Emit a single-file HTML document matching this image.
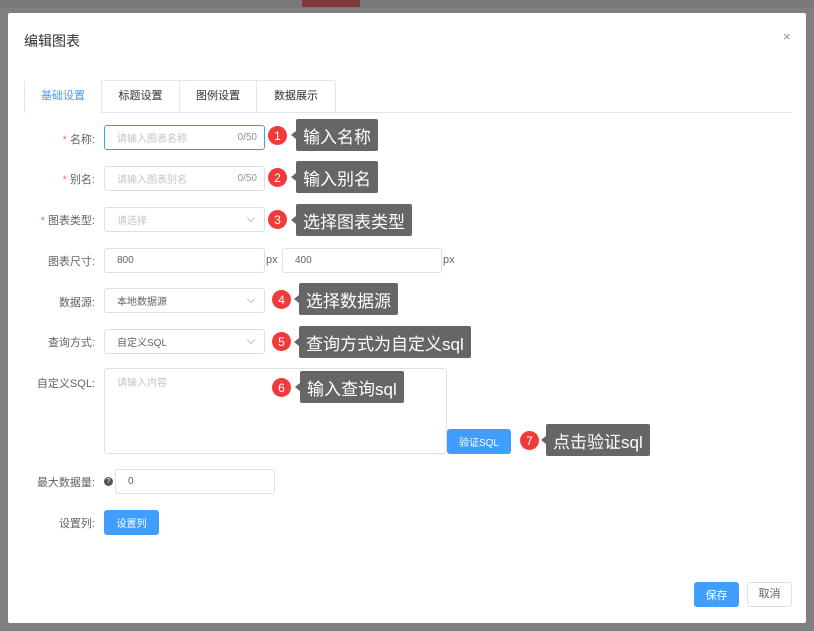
<!DOCTYPE html>
<html><head><meta charset="utf-8"><style>
*{box-sizing:border-box;margin:0;padding:0}
body{width:814px;height:631px;background:#808080;position:relative;overflow:hidden;font-family:"Liberation Sans","Noto Sans CJK SC",sans-serif;font-size:11px;color:#606266}
.a{position:absolute}
.dlg{left:8px;top:13px;width:798px;height:610px;background:#fff;border-radius:2px}
.inp{position:absolute;border:1px solid #dcdfe6;border-radius:3px;background:#fff;height:25px;display:flex;align-items:center;padding-left:12px;font-size:10px;color:#c0c4cc}
.lbl{position:absolute;right:719px;font-size:11px;color:#606266;text-align:right;white-space:nowrap}
.st{color:#f56c6c}
.cnt{position:absolute;right:7px;top:0;height:23px;display:flex;align-items:center;color:#909399}
.arr{position:absolute;right:10px;top:7px;width:6px;height:6px;border-right:1px solid #c0c4cc;border-bottom:1px solid #c0c4cc;transform:rotate(45deg)}
.num{position:absolute;width:19px;height:19px;border-radius:50%;background:#f03b3b;color:#fff;font-size:12px;display:flex;align-items:center;justify-content:center}
.tip{position:absolute;background:#666;color:#fff;font-size:17px;height:32px;display:flex;align-items:center;padding:0 7px;border-radius:2px;white-space:nowrap}
.tip:before{content:"";position:absolute;left:-5px;top:12px;border:4px solid transparent;border-right-color:#666;border-left:0;border-right-width:5px}
.btn{position:absolute;background:#409eff;color:#fff;border-radius:3px;display:flex;align-items:center;justify-content:center;font-size:10px}
</style></head><body>
<div class="a" style="left:0;top:0;width:814px;height:8px;background:#7a7a7a"></div>
<div class="a" style="left:302px;top:0;width:58px;height:7px;background:#7d3a3a"></div>
<div class="a dlg"></div>
<div class="a" style="left:24px;top:31px;font-size:14px;color:#303133">编辑图表</div>
<div class="a" style="left:783px;top:29px;font-size:13px;color:#909399">×</div>
<div class="a" style="left:24px;top:112px;width:768px;height:1px;background:#e4e7ed"></div>
<div class="a" style="left:24px;top:80px;width:312px;height:33px;border:1px solid #e4e7ed;border-bottom:none;border-radius:3px 3px 0 0"></div>
<div class="a" style="left:25px;top:80px;width:77px;height:33px;background:#fff;border-right:1px solid #e4e7ed;text-align:center;line-height:33px;color:#409eff">基础设置</div>
<div class="a" style="left:102px;top:80px;width:78px;height:32px;border-right:1px solid #e4e7ed;text-align:center;line-height:33px;color:#303133">标题设置</div>
<div class="a" style="left:180px;top:80px;width:77px;height:32px;border-right:1px solid #e4e7ed;text-align:center;line-height:33px;color:#303133">图例设置</div>
<div class="a" style="left:257px;top:80px;width:78px;height:32px;text-align:center;line-height:33px;color:#303133">数据展示</div>

<div class="lbl" style="top:131px"><span class="st">* </span>名称:</div>
<div class="inp" style="left:104px;top:125px;width:161px;border-color:#409eff">请输入图表名称<span class="cnt">0/50</span></div>
<div class="lbl" style="top:171px"><span class="st">* </span>别名:</div>
<div class="inp" style="left:104px;top:166px;width:161px">请输入图表别名<span class="cnt">0/50</span></div>
<div class="lbl" style="top:212px"><span class="st">* </span>图表类型:</div>
<div class="inp" style="left:104px;top:207px;width:161px">请选择<span class="arr"></span></div>
<div class="lbl" style="top:253px">图表尺寸:</div>
<div class="inp" style="left:104px;top:248px;width:161px;color:#606266">800</div>
<div class="a" style="left:266px;top:254px">px</div>
<div class="inp" style="left:282px;top:248px;width:160px;color:#606266">400</div>
<div class="a" style="left:443px;top:254px">px</div>
<div class="lbl" style="top:294px">数据源:</div>
<div class="inp" style="left:104px;top:288px;width:161px;color:#606266">本地数据源<span class="arr"></span></div>
<div class="lbl" style="top:334px">查询方式:</div>
<div class="inp" style="left:104px;top:329px;width:161px;color:#606266">自定义SQL<span class="arr"></span></div>
<div class="lbl" style="top:375px">自定义SQL:</div>
<div class="inp" style="left:104px;top:368px;width:343px;height:86px;align-items:flex-start;padding-top:5px">请输入内容</div>
<div class="btn" style="left:447px;top:429px;width:64px;height:25px">验证SQL</div>
<div class="lbl" style="top:474px">最大数据量:</div>
<div class="a" style="left:104px;top:477px;width:9px;height:9px;border-radius:50%;background:#555;color:#fff;font-size:7px;text-align:center;line-height:9px">?</div>
<div class="inp" style="left:115px;top:469px;width:160px;color:#606266">0</div>
<div class="lbl" style="top:515px">设置列:</div>
<div class="btn" style="left:104px;top:510px;width:55px;height:25px">设置列</div>
<div class="btn" style="left:694px;top:582px;width:45px;height:25px;font-size:11px">保存</div>
<div class="a" style="left:747px;top:582px;width:45px;height:25px;line-height:23px;border:1px solid #dcdfe6;border-radius:3px;text-align:center;color:#606266">取消</div>

<div class="num" style="left:268px;top:126px">1</div><div class="tip" style="left:296px;top:119px">输入名称</div>
<div class="num" style="left:268px;top:168px">2</div><div class="tip" style="left:296px;top:161px">输入别名</div>
<div class="num" style="left:268px;top:210px">3</div><div class="tip" style="left:296px;top:204px">选择图表类型</div>
<div class="num" style="left:272px;top:290px">4</div><div class="tip" style="left:299px;top:283px">选择数据源</div>
<div class="num" style="left:272px;top:332px">5</div><div class="tip" style="left:299px;top:326px">查询方式为自定义sql</div>
<div class="num" style="left:272px;top:378px">6</div><div class="tip" style="left:300px;top:371px">输入查询sql</div>
<div class="num" style="left:520px;top:431px">7</div><div class="tip" style="left:546px;top:424px">点击验证sql</div>
</body></html>
